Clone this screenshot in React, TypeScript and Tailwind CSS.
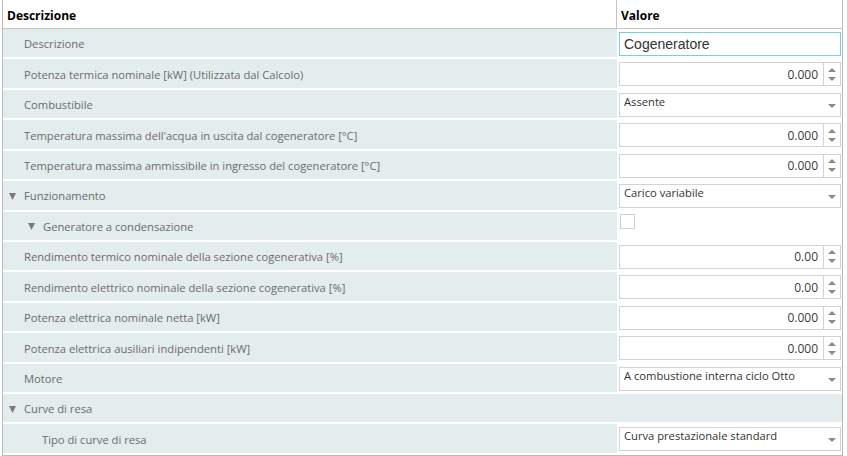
import React from 'react';

type Kind = 'text' | 'number' | 'select' | 'check' | 'none';

interface Row {
  label: string;
  kind: Kind;
  value?: string;
  level?: number;
  group?: boolean;
}

const rows: Row[] = [
  { label: 'Descrizione', kind: 'text', value: 'Cogeneratore' },
  { label: 'Potenza termica nominale [kW] (Utilizzata dal Calcolo)', kind: 'number', value: '0.000' },
  { label: 'Combustibile', kind: 'select', value: 'Assente' },
  { label: "Temperatura massima dell'acqua in uscita dal cogeneratore [°C]", kind: 'number', value: '0.000' },
  { label: 'Temperatura massima ammissibile in ingresso del cogeneratore [°C]', kind: 'number', value: '0.000' },
  { label: 'Funzionamento', kind: 'select', value: 'Carico variabile', group: true },
  { label: 'Generatore a condensazione', kind: 'check', group: true, level: 1 },
  { label: 'Rendimento termico nominale della sezione cogenerativa [%]', kind: 'number', value: '0.00' },
  { label: 'Rendimento elettrico nominale della sezione cogenerativa [%]', kind: 'number', value: '0.00' },
  { label: 'Potenza elettrica nominale netta [kW]', kind: 'number', value: '0.000' },
  { label: 'Potenza elettrica ausiliari indipendenti [kW]', kind: 'number', value: '0.000' },
  { label: 'Motore', kind: 'select', value: 'A combustione interna ciclo Otto' },
  { label: 'Curve di resa', kind: 'none', group: true },
  { label: 'Tipo di curve di resa', kind: 'select', value: 'Curva prestazionale standard', level: 1 },
];

function Caret({ className, w = 8, h = 5 }: { className?: string; w?: number; h?: number }) {
  return (
    <svg className={className} width={w} height={h} viewBox={`0 0 ${w} ${h}`}>
      <path d={`M0 0H${w}L${w / 2} ${h}z`} fill="currentColor" />
    </svg>
  );
}

function Editor({ row }: { row: Row }) {
  if (row.kind === 'text') {
    return (
      <div className="h-[24px] border border-[#7ecbe8] bg-white flex items-center pl-[4px] text-[14px] text-[#333] font-['Liberation_Sans',sans-serif]">
        {row.value}
      </div>
    );
  }
  if (row.kind === 'number') {
    return (
      <div className="h-[24px] border border-[#d3d3d3] bg-white flex">
        <div className="flex-1 flex items-center justify-end pr-[5px] pt-[1px] text-[12px] text-[#3a3a3a]">{row.value}</div>
        <div className="w-[17px] border-l border-[#d3d3d3] flex flex-col items-center justify-center gap-[5px] text-[#8a8a8a]">
          <Caret className="rotate-180" w={8} h={4} />
          <Caret w={8} h={4} />
        </div>
      </div>
    );
  }
  if (row.kind === 'select') {
    return (
      <div className="h-[24px] border border-[#d3d3d3] bg-white flex items-start justify-between pl-[4px] pr-[4px]">
        <span className="text-[11.2px] leading-[16px] text-[#333]">{row.value}</span>
        <Caret className="mt-[10px] text-[#8a8a8a]" w={8} h={4} />
      </div>
    );
  }
  if (row.kind === 'check') {
    return <div className="w-[15px] h-[15px] border border-[#cfcfcf] bg-white ml-[1px] -mt-[1px]" />;
  }
  return null;
}

export default function App() {
  return (
    <div className="w-[847px] h-[456px] bg-white font-['Open_Sans',sans-serif] overflow-hidden">
      <div className="ml-[2px] w-[841px] border-l border-r border-b border-[#b9b9b9]">
        {/* Header */}
        <div className="flex h-[29px] border-b border-[#c4c4c4] text-[12px] font-bold text-black">
          <div className="w-[614px] border-r border-[#c4c4c4] flex items-center pl-[4px] pt-[3px]">Descrizione</div>
          <div className="flex-1 flex items-center pl-[4px] pt-[3px]">Valore</div>
        </div>

        {/* Rows */}
        {rows.map((row, i) => {
          const full = row.kind === 'none';
          const indent = row.group ? (row.level ? 'pl-[25px]' : 'pl-[6px]') : row.level ? 'pl-[39px]' : 'pl-[21px]';
          return (
            <div
              key={i}
              className={`flex h-[30.43px] border-b-2 border-white ${full ? 'bg-[#e4eded]' : ''}`}
            >
              <div className={`w-[614px] bg-[#e4eded] flex items-center pt-[3px] ${indent} text-[11.2px] text-[#6b6b6b]`}>
                {row.group && <Caret className="mr-[8px] -mt-[1px] text-[#7a7a7a]" w={7} h={7} />}
                <span>{row.label}</span>
              </div>
              <div className="flex-1 pl-[2px] pr-[1px] pt-[3px]">
                <Editor row={row} />
              </div>
            </div>
          );
        })}
      </div>
    </div>
  );
}
